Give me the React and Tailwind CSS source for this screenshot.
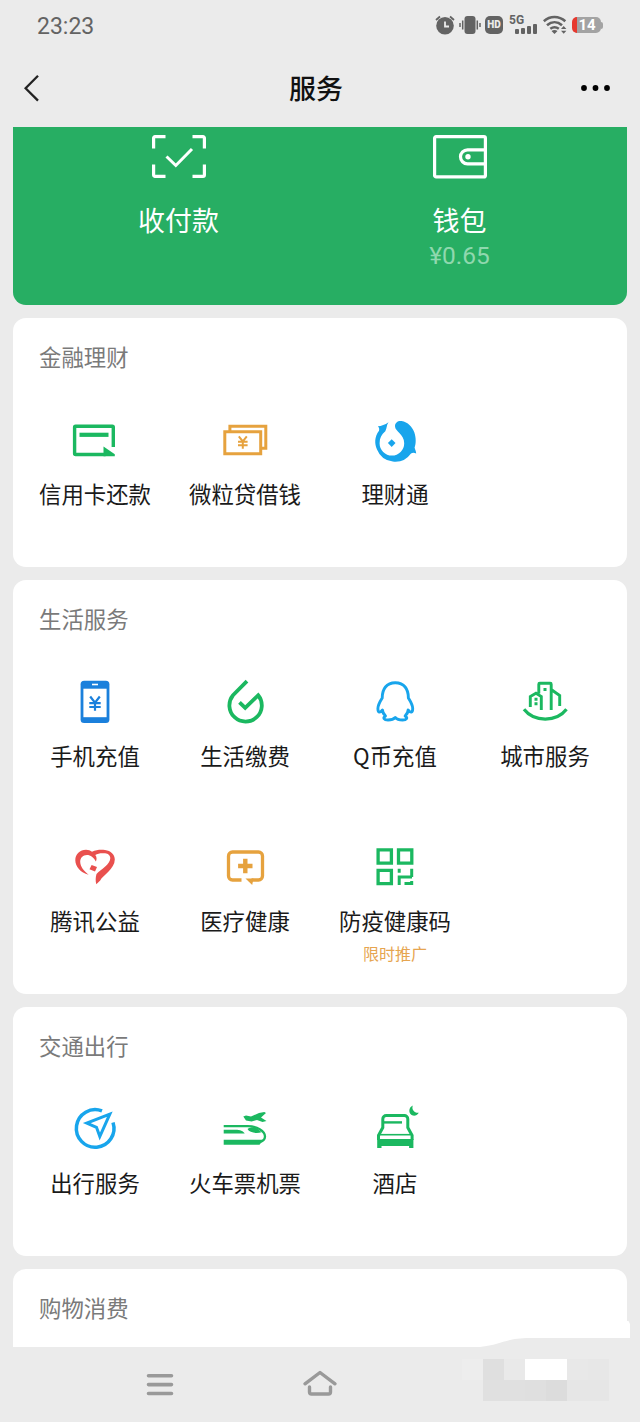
const GREEN = "#1bb860";
const ORANGE = "#e6a23e";
const BLUE = "#18a5ec";

function Icon({ children, color }) {
  return (
    <svg width="48" height="48" viewBox="0 0 48 48" fill="none" stroke={color} strokeWidth="3" className="overflow-visible">
      {children}
    </svg>
  );
}

function CreditCard() {
  return (
    <Icon color={GREEN}>
      <path d="M42.3 31V11.3a1 1 0 0 0-1-1H4.600a1 1 0 0 0-1 1v26.200a1 1 0 0 0 1 1h30" strokeWidth="3.400" />
      <path d="M8.500 18.800H37.500" strokeWidth="4.200" />
      <path d="M32.500 30.500 43.800 38.300V40.200H32.500z" fill={GREEN} stroke="none" />
    </Icon>
  );
}

function Loan() {
  return (
    <Icon color={ORANGE}>
      <path d="M8.900 15v-4.700h35.900v22H40" strokeWidth="3" />
      <path d="M3.800 15.800h35.900v21.900H3.800z" strokeWidth="3" />
      <path d="m17.800 20.300 4 5 4-5M21.800 25.300v7.500M17 25.800h9.600M17 29.200h9.600" strokeWidth="2" />
    </Icon>
  );
}

function LiCaiTong() {
  return (
    <Icon color={BLUE}>
      <path
        d="M17.500 6.300C14 8.800 10 10.300 6.800 10.200C8.200 11.500 8.500 13 8 14.800C3.300 21 3.500 28 6 33.500A19.500 19.500 0 0 0 40 37.500C41.500 36.400 43 36.300 45.200 37.500C45 35 44 33.500 43.600 31.500C45 28 45.300 22 43.200 16C41 10.500 37 6.300 30.500 5C27 4.500 24 6.500 24 10.200C24 15.500 33.200 18 33.200 27.200A12.300 12.300 0 0 1 8.600 27.200C8.600 22 10.500 18.500 14.300 15.300C16 12.500 15.300 9.500 17.500 6.300z"
        fill={BLUE}
        stroke="none"
      />
      <path d="m20.700 23.200 3.800 3.900-3.800 3.900-3.800-3.900z" fill={BLUE} stroke="none" />
    </Icon>
  );
}

function Phone() {
  return (
    <Icon color="#1b80dc">
      <rect x="9.600" y="2.800" width="28.800" height="42.200" rx="3.500" fill="#1b80dc" stroke="none" />
      <path d="M12.400 10.700h23.200v28.500H12.400z" fill="#fff" stroke="none" />
      <path d="M21 6.500h6" stroke="#fff" strokeWidth="1.600" />
      <path d="m19.200 18.500 4.800 6.200 4.800-6.200M24 24.500v8.200M18.300 25.200h11.400M18.300 29h11.400" strokeWidth="2.200" />
    </Icon>
  );
}

function Drop() {
  return (
    <Icon color={GREEN}>
      <path d="M26 3.200 12 17.200A16.200 16.200 0 1 0 37.200 17.200L24.200 29.900 18.500 24.300" strokeWidth="3.800" />
    </Icon>
  );
}

function Penguin() {
  return (
    <Icon color={BLUE}>
      <path
        d="M24.300 4.700C15.500 4.700 11.200 11 11.200 20C9 23.500 6.900 27 6.900 30.500C6.900 35 9 35 11.500 32C11.500 35 13 36.500 14.500 38C11.500 40 13 42 17 42C21 42 23 41 24.300 39.500C25.600 41 27.600 42 31.600 42C35.600 42 37.100 40 34.100 38C35.600 36.500 37.100 35 37.100 32C39.600 35 41.700 35 41.700 30.500C41.700 27 39.600 23.500 37.400 20C37.400 11 33.100 4.700 24.300 4.700z"
        strokeWidth="2.900"
        strokeLinejoin="round"
      />
    </Icon>
  );
}

function City() {
  return (
    <Icon color={GREEN}>
      <path d="M3 31.300C13 44.300 35.500 44.300 45.500 31.300" strokeWidth="3.200" />
      <path d="M9.300 29V18.500l5.700-3.300 5.300 3.300V32M17.800 15.500V6.200a1 1 0 0 1 1-1h10.400a1 1 0 0 1 1 1V32M30.200 11.500l8.500 6V28" strokeWidth="2.900" />
      <path d="M13.500 21.300h3M13.500 25.700h3M22.500 11.500h3" strokeWidth="3" />
    </Icon>
  );
}

function Heart() {
  return (
    <Icon color="#e9504e">
      <path
        d="M17.600 31.800C9.500 29.500 4.300 23.500 4.300 17.200C4.300 11 9 6.800 15 6.800C17.500 6.800 19.500 7.600 21 8.800C25.500 6.600 30 6.600 34 7C39.800 7.700 43.800 11.500 43.800 16.500C43.800 26 31.500 32.500 29.200 37.500L25.300 41.200C24.400 38 24.500 34 25.500 31C29.500 26.500 39.500 21.500 39.300 15C39 10.800 35 9.900 31.500 10.300C28.500 10.300 26.300 10.800 24.300 12C25.800 14 26 16.500 24.800 18.500C22.800 14.500 19.500 12 16 12C11.700 12 9.200 15 9.200 18.800C9.200 23.800 13 28 17.600 31.800z"
        fill="#e9504e"
        stroke="none"
      />
      <path d="m20.600 22 5.400 2-2 4.500-5.500-2.300z" fill="#e9504e" stroke="none" />
    </Icon>
  );
}

function Medical() {
  return (
    <Icon color={ORANGE}>
      <path d="M20.500 37H11.500a4 4 0 0 1-4-4V13a4 4 0 0 1 4-4h26a4 4 0 0 1 4 4v20a4 4 0 0 1-4 4h-7" strokeWidth="3.300" />
      <path d="M24.500 35.400h8l-1.300 6.600z" fill={ORANGE} stroke="none" />
      <path d="M24.300 15.800v14.400M17.100 23h14.400" strokeWidth="4.400" />
    </Icon>
  );
}

function HealthCode() {
  return (
    <Icon color={GREEN}>
      <path d="M7.100 6.800h13.300v13.400H7.100zM27.500 6.800h13.300v13.400H27.500zM7.100 27.300h13.300v13.400H7.100z" strokeWidth="3.300" />
      <path d="M28.200 25.700v4M28.200 42v-7M26.700 34h14.300M40.700 25.700V34M40.700 42v-4M33.500 40.500H42" strokeWidth="3" />
    </Icon>
  );
}

function Compass() {
  return (
    <Icon color={BLUE}>
      <path d="M31 5.900A18.800 18.800 0 1 0 42 17.500" strokeWidth="3.500" />
      <path d="M38.800 9.200 15.800 18l9.700 4.300 3.300 9.200z" strokeWidth="3" />
    </Icon>
  );
}

function Train() {
  return (
    <Icon color={GREEN}>
      <path d="M22.300 11.500 25 10.500l5 1 8-3.500L43.300 7l1.700 1-5 4.500 5.500 3.400-4 1-5.500-1.900-5.500 1.500-5.500-1z" fill={GREEN} stroke="none" />
      <path d="M2.700 21.200h24c9 0 17.300 4.500 17.300 10.300 0 3.500-3.500 5.300-6.500 5.900" strokeWidth="2.300" />
      <path d="M2.700 24.700h12c4 0 8 1.500 9 3.800h-21zM26.500 24c2-1.800 5.500-2.300 8.500-1.500l5.500 4.800c-5 1.500-12 .5-14-3.300z" fill={GREEN} stroke="none" />
      <path d="M2.700 34.800h39.800l-4 5H2.700z" fill={GREEN} stroke="none" />
    </Icon>
  );
}

function Hotel() {
  return (
    <Icon color={GREEN}>
      <path d="M7.500 35v-4.500l4.300-8V14a3.500 3.500 0 0 1 3.500-3.500h18a3.500 3.500 0 0 1 3.500 3.500v8.500l4.300 8V35" strokeWidth="3" />
      <path d="M12 17.400H31" strokeWidth="2.400" />
      <path d="M10.500 26.500 13 30.500h22.500l2.500-4" strokeWidth="0" />
      <path d="M6.200 34h36.200v9h-4.300v-2H10.500v2H6.200z" fill={GREEN} stroke="none" />
      <path d="M9 29.700h30.500" strokeWidth="1.600" />
      <path d="M41.800.5c-1.500 4 1.500 7.700 6 7.300-2 3.500-6.300 3.700-8.300 1.200-2.300-2.800-1-7 2.300-8.500z" fill={GREEN} stroke="none" />
    </Icon>
  );
}

const sections = [
  {
    title: "金融理财",
    items: [
      { label: "信用卡还款", icon: CreditCard },
      { label: "微粒贷借钱", icon: Loan },
      { label: "理财通", icon: LiCaiTong },
    ],
  },
  {
    title: "生活服务",
    items: [
      { label: "手机充值", icon: Phone },
      { label: "生活缴费", icon: Drop },
      { label: "Q币充值", icon: Penguin },
      { label: "城市服务", icon: City },
      { label: "腾讯公益", icon: Heart },
      { label: "医疗健康", icon: Medical },
      { label: "防疫健康码", icon: HealthCode, note: "限时推广" },
    ],
  },
  {
    title: "交通出行",
    items: [
      { label: "出行服务", icon: Compass },
      { label: "火车票机票", icon: Train },
      { label: "酒店", icon: Hotel },
    ],
  },
];

function StatusBar() {
  return (
    <div className="flex h-[52px] items-center justify-between pl-[37px] pr-9 text-[#636363]">
      <span className="pt-0.5 font-['Roboto',sans-serif] text-[23px] leading-8">23:23</span>
      <div className="flex h-5 items-center pb-0.5">
        {/* Alarm */}
        <svg width="20" height="20" viewBox="0 0 20 20" fill="none" stroke="currentColor" strokeWidth="1.800" className="-ml-px mr-px">
          <circle cx="10" cy="10.800" r="8.800" fill="currentColor" stroke="none" />
          <path d="M1 5 5 1.500M19 5 15 1.500" />
          <path d="M10 6.500v5h4" stroke="#ebebeb" />
        </svg>
        {/* Vibrate */}
        <svg width="22" height="20" viewBox="0 0 22 20" className="ml-[3px]" stroke="currentColor" strokeWidth="1.500">
          <rect x="5.500" y="1" width="11" height="18" rx="3" fill="currentColor" stroke="none" />
          <path d="M3.700 5.500v9M1 8v4M18.300 5.500v9M21 8v4" />
        </svg>
        <span className="ml-1 flex h-[18px] w-[18px] items-center justify-center rounded-[5px] bg-[#636363] font-['Roboto',sans-serif] text-[10px] font-black leading-none text-[#ebebeb]">
          HD
        </span>
        {/* Mobile signal */}
        <div className="ml-1.5 flex h-5 w-7 flex-col">
          <span className="h-[9px] font-['Roboto',sans-serif] text-[12px] font-bold leading-[10px]">5G</span>
          <div className="flex items-end gap-[2px] self-end">
            <i className="h-[5px] w-[4px] rounded-[1px] bg-[#636363]" />
            <i className="h-[6px] w-[4px] rounded-[1px] bg-[#636363]" />
            <i className="h-[8px] w-[4px] rounded-[1px] bg-[#636363]" />
            <i className="h-[10px] w-[4px] rounded-[1px] bg-[#636363]" />
          </div>
        </div>
        {/* Wifi */}
        <svg width="24" height="20" viewBox="0 0 24 20" fill="none" stroke="currentColor" strokeWidth="2.600" className="ml-1.5">
          <path d="M.8 6.200C7 .6 16 .6 22.300 6.200M4 10.200c4.600-4 10.500-4 15 0M7.300 13.800c2.800-2 5.700-2 8.500 0" />
          <path d="m8.500 16 3 3 3-3c-2-1.300-4-1.300-6 0zM18 14l2.700-3 2.700 3zM18 15.800h5.400l-2.700 3z" fill="currentColor" stroke="none" />
        </svg>
        <div className="ml-[5px] mr-px flex items-center">
          <div className="flex h-4 w-[29px] items-center justify-center overflow-hidden rounded-[5px] border-l-[5px] border-[#e6392f] bg-[#a3a3a3] pr-1 font-['Roboto',sans-serif] text-[15px] font-bold leading-4 text-white">
            14
          </div>
          <i className="h-[7px] w-[2px] rounded-r bg-[#a3a3a3]" />
        </div>
      </div>
    </div>
  );
}

function Header() {
  return (
    <div className="flex h-[75px] items-center justify-between pb-[3px] pl-6 pr-[29px]">
      <svg width="28" height="28" viewBox="0 0 28 28" fill="none" stroke="#222" strokeWidth="2.300">
        <path d="M14 1.800 1.600 14.200 14 26.600" />
      </svg>
      <h1 className="text-[27px] font-medium leading-9 text-[#111]">服务</h1>
      <svg width="31" height="6" viewBox="0 0 31 6" fill="#000">
        <circle cx="4" cy="3" r="2.900" />
        <circle cx="15.500" cy="3" r="2.900" />
        <circle cx="27" cy="3" r="2.900" />
      </svg>
    </div>
  );
}

function WalletPanel() {
  return (
    <div className="grid h-[178px] grid-cols-2 rounded-b-[13px] bg-[#27ae63] pl-[25px] pr-[27px] pt-2 text-white">
      <div className="flex flex-col items-center">
        <svg width="54" height="44" viewBox="0 0 54 44" fill="none" stroke="#fff" strokeWidth="3.200">
          <path d="M1.600 13.500V3A1.400 1.400 0 0 1 3 1.600h10.500M40.500 1.600H51A1.400 1.400 0 0 1 52.400 3v10.500M52.400 29.500V40a1.400 1.400 0 0 1-1.400 1.400H40.500M13.500 41.400H3A1.400 1.400 0 0 1 1.600 40V29.500" />
          <path d="m14.500 21.500 9.300 9L40 14" strokeWidth="3" />
        </svg>
        <span className="mt-[23px] text-[27px] leading-9">收付款</span>
      </div>
      <div className="flex flex-col items-center">
        <svg width="54" height="44" viewBox="0 0 54 44" fill="none" stroke="#fff" strokeWidth="3.200">
          <rect x="1.600" y="1.600" width="50.800" height="40.300" rx="1.500" />
          <path d="M52 14.800H34.500a7 7 0 0 0 0 14H52" />
          <circle cx="35" cy="21.800" r="2.700" fill="#fff" stroke="none" />
        </svg>
        <span className="mt-[23px] text-[27px] leading-9">钱包</span>
        <span className="mt-0.5 font-['Roboto',sans-serif] text-[24.500px] leading-8 text-[#8fd8ae]">¥0.65</span>
      </div>
    </div>
  );
}

function Section({ title, items }) {
  return (
    <section className="rounded-[13px] bg-white px-[7px] pb-[30px] pt-[22px]">
      <h2 className="pl-[19px] text-[22.400px] leading-8 text-[#7a7a7a]">{title}</h2>
      <div className="grid grid-cols-4">
        {items.map(({ label, icon: ItemIcon, note }) => (
          <div key={label} className="flex h-[165px] flex-col items-center pt-[44px]">
            <ItemIcon />
            <span className="mt-[13px] whitespace-nowrap text-[22.400px] leading-8 text-[#1a1a1a]">{label}</span>
            {note && <span className="mt-[7px] text-[16px] leading-5 text-[#e6a550]">{note}</span>}
          </div>
        ))}
      </div>
    </section>
  );
}

function NavBar() {
  return (
    <nav className="relative flex h-[75px] justify-between bg-[#ebebeb] pl-[146px] pr-[31px] pt-3">
      {/* Soft edge where the last card runs under the bar */}
      <svg width="160" height="26" viewBox="0 0 160 26" className="absolute -top-[26px] right-0">
        <path d="M147 0h1.500l1.500 3v14h-3z" fill="#fff" />
        <path d="M0 26C22 24 25 17 50 17H160V26z" fill="#ebebeb" />
      </svg>
      <svg width="28" height="24" viewBox="0 0 28 24" stroke="#999" strokeWidth="3.600" strokeLinecap="round" className="mt-3.5">
        <path d="M2.500 2.700h23M2.500 11.600h23M2.500 20.500h23" />
      </svg>
      <svg width="36" height="28" viewBox="0 0 36 28" fill="none" stroke="#999" strokeWidth="3.400" strokeLinecap="round" strokeLinejoin="round" className="ml-1 mt-2.5">
        <path d="M3 14.800 18 3.500l15 11.300M7.500 18v5a2 2 0 0 0 2 2h17a2 2 0 0 0 2-2v-5" />
      </svg>
      <div className="grid h-[42px] grid-cols-7">
        <i className="h-[21px] w-[21px] bg-[#ededed]" />
        <i className="bg-[#dfdfdf]" />
        <i className="bg-[#e9e9e9]" />
        <i className="bg-white" />
        <i className="bg-white" />
        <i className="bg-[#e8e8e8]" />
        <i className="bg-[#e7e7e7]" />
        <i className="h-[21px] w-[21px]" />
        <i className="bg-[#e0e0e0]" />
        <i className="bg-[#e0e0e0]" />
        <i className="bg-[#dfdfdf]" />
        <i className="bg-[#dcdcdc]" />
        <i className="bg-[#e6e6e6]" />
        <i className="bg-[#e6e6e6]" />
      </div>
    </nav>
  );
}

export default function App() {
  return (
    <div className="flex h-[1422px] w-[640px] flex-col overflow-hidden bg-[#ebebeb] font-['Noto_Sans_CJK_SC',sans-serif]">
      <StatusBar />
      <Header />
      <main className="flex h-[1220px] flex-col gap-[13px] overflow-hidden px-[13px]">
        <WalletPanel />
        {sections.map((section) => (
          <Section key={section.title} title={section.title} items={section.items} />
        ))}
        <section className="h-[78px] rounded-t-[13px] bg-white px-[26px] pt-[22px]">
          <h2 className="text-[22.400px] leading-8 text-[#7a7a7a]">购物消费</h2>
        </section>
      </main>
      <NavBar />
    </div>
  );
}
